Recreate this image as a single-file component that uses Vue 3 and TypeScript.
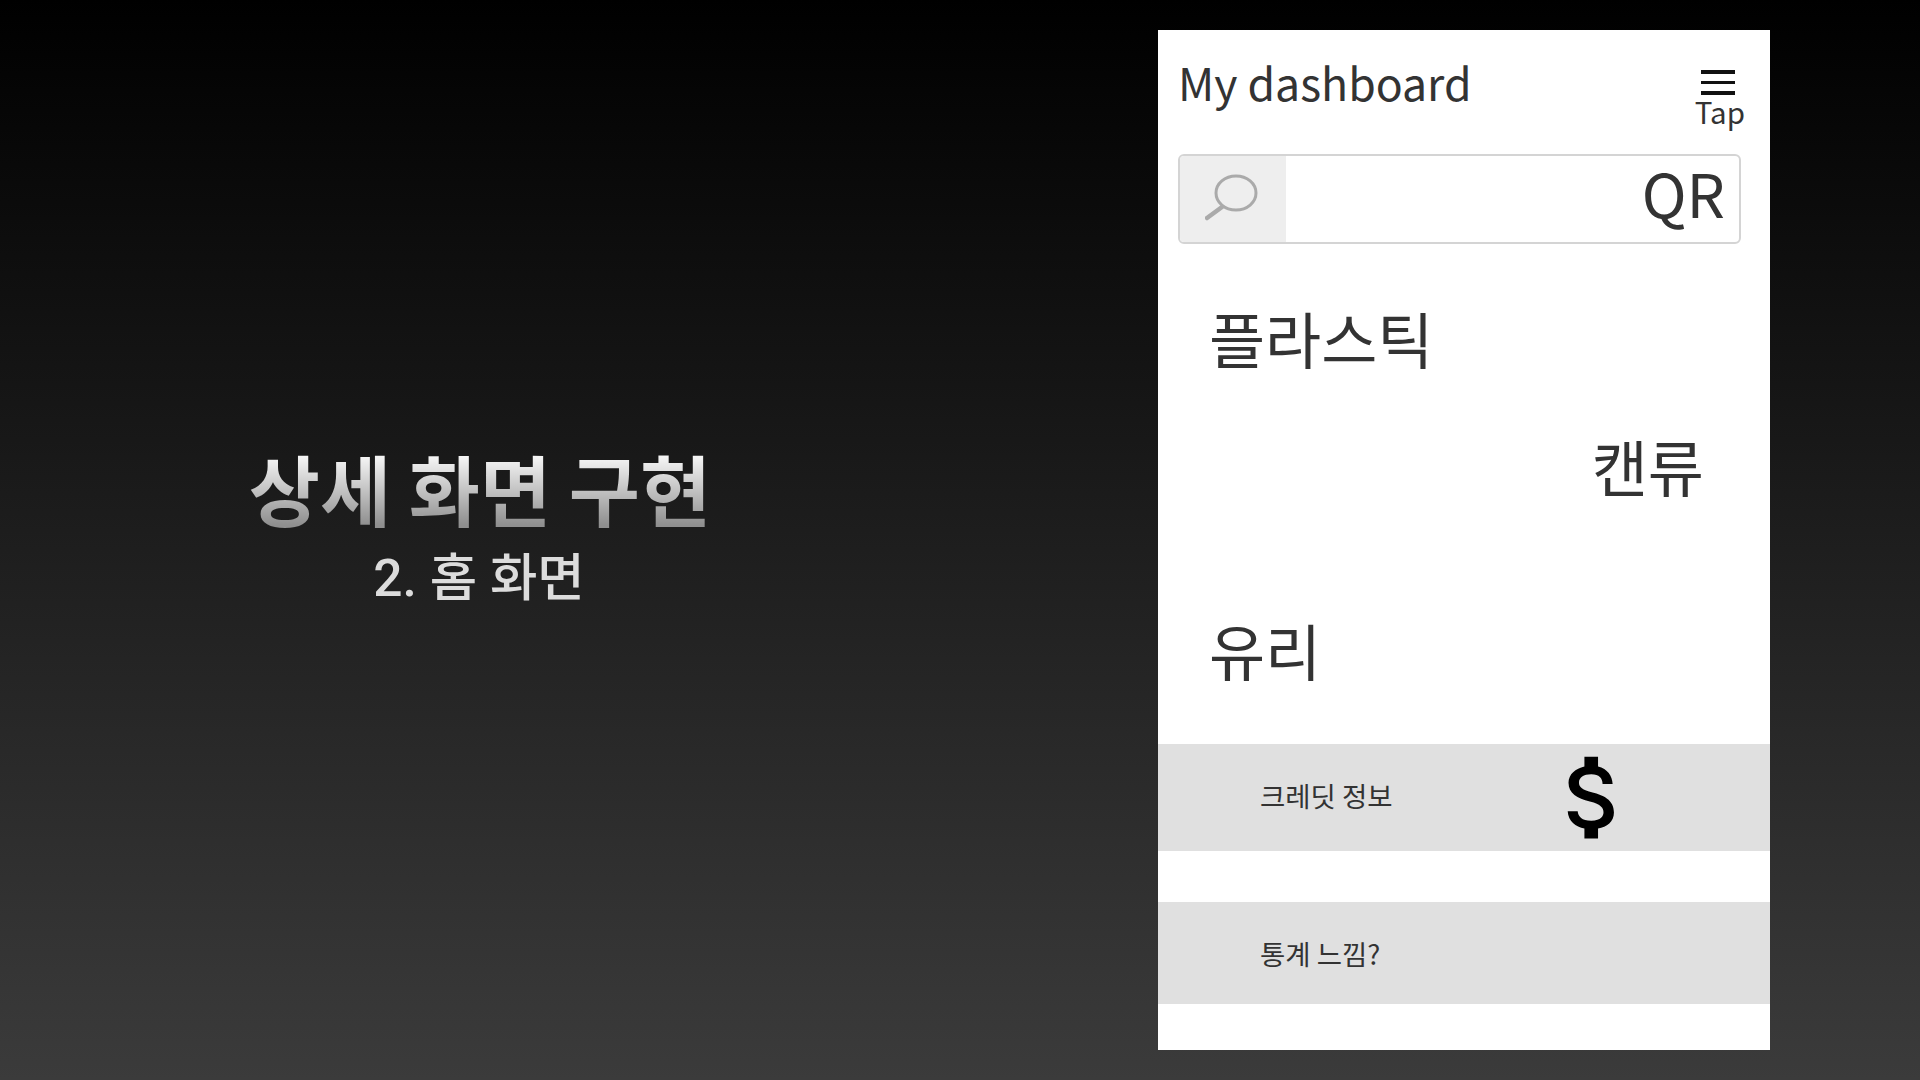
<script setup lang="ts">
const categories: { label: string; end: boolean }[] = [
  { label: '플라스틱', end: false },
  { label: '캔류', end: true },
  { label: '유리', end: false },
]
</script>

<template>
  <div class="slide">
    <section class="intro">
      <h1 class="headline">상세 화면 구현</h1>
      <p class="subline">2. 홈 화면</p>
    </section>
    <main class="phone">
      <header class="top">
        <h2 class="title">My dashboard</h2>
        <div class="menu">
          <span class="bars"><i></i><i></i><i></i></span>
          <span class="tap">Tap</span>
        </div>
      </header>
      <div class="search">
        <div class="search-icon">
          <svg width="60" height="52" viewBox="0 0 60 52" fill="none">
            <ellipse cx="31" cy="20" rx="20" ry="17" stroke="#aaa" stroke-width="3" />
            <path d="M17 34 2 45" stroke="#aaa" stroke-width="4.5" stroke-linecap="round" />
          </svg>
        </div>
        <span class="qr">QR</span>
      </div>
      <ul class="cats">
        <li v-for="c in categories" :key="c.label" class="cat" :class="{ end: c.end }">{{ c.label }}</li>
      </ul>
      <div class="row credit">
        <span class="row-label">크레딧 정보</span>
        <svg class="dollar" viewBox="0 0 24 24" fill="#000">
          <path d="M11.8 10.9c-2.27-.59-3-1.2-3-2.15 0-1.09 1.01-1.85 2.7-1.85 1.78 0 2.44.85 2.5 2.1h2.21c-.07-1.72-1.12-3.3-3.21-3.81V3h-3v2.16c-1.94.42-3.5 1.68-3.5 3.61 0 2.31 1.91 3.46 4.7 4.13 2.5.6 3 1.48 3 2.41 0 .69-.49 1.79-2.7 1.79-2.06 0-2.87-.92-2.98-2.1h-2.2c.12 2.19 1.76 3.42 3.68 3.83V21h3v-2.15c1.95-.37 3.5-1.5 3.5-3.55 0-2.84-2.43-3.81-4.7-4.4z" />
        </svg>
      </div>
      <div class="row stats">
        <span class="row-label">통계 느낌?</span>
      </div>
    </main>
  </div>
</template>

<style scoped>
.slide {
  width: 1920px;
  height: 1080px;
  display: flex;
  background: linear-gradient(180deg, #000 0%, #3b3b3b 100%);
  font-family: "Noto Sans CJK KR", "Noto Sans", sans-serif;
  overflow: hidden;
}
.intro {
  width: 958px;
  display: flex;
  flex-direction: column;
  align-items: center;
  padding-top: 438px;
  box-sizing: border-box;
}
.headline {
  margin: 0 0 0 2px;
  font-size: 77.4px;
  line-height: 99px;
  font-weight: 700;
  background: linear-gradient(180deg, #fff 12%, #8f8f8f 88%);
  -webkit-background-clip: text;
  background-clip: text;
  color: transparent;
}
.subline {
  margin: 3px 0 0;
  font-family: Roboto, "Noto Sans CJK KR", sans-serif;
  font-size: 51.5px;
  line-height: 78px;
  font-weight: 500;
  color: #dcdcdc;
}
.phone {
  width: 612px;
  height: 1020px;
  margin: 30px 0 0 200px;
  background: #fff;
  display: flex;
  flex-direction: column;
  color: #333;
}
.top {
  height: 124px;
  padding: 0 27px 0 20px;
  display: flex;
  justify-content: space-between;
}
.title {
  margin: 22px 0 0;
  font-size: 44.6px;
  line-height: 60px;
  font-weight: 400;
}
.menu {
  margin: 40px -2px 0 0;
  display: flex;
  flex-direction: column;
  align-items: center;
}
.bars {
  width: 34px;
  margin-right: 4px;
  display: flex;
  flex-direction: column;
  gap: 7px;
}
.bars i {
  height: 3.5px;
  background: #111;
}
.tap {
  font-size: 29.5px;
  line-height: 32px;
  font-weight: 400;
}
.search {
  margin: 0 29px 0 20px;
  height: 90px;
  box-sizing: border-box;
  border: 2px solid #d4d4d4;
  border-radius: 6px;
  display: flex;
  align-items: center;
  justify-content: space-between;
}
.search-icon {
  width: 106px;
  height: 100%;
  padding-left: 4px;
  box-sizing: border-box;
  border-radius: 4px 0 0 4px;
  background: #eee;
  display: flex;
  align-items: center;
  justify-content: center;
}
.qr {
  font-size: 60.5px;
  line-height: 70px;
  padding: 0 14px 14px 0;
}
.cats {
  list-style: none;
  margin: 0;
  padding: 52px 0 0;
  display: flex;
  flex-direction: column;
}
.cat {
  padding: 0 66px 0 51px;
  font-size: 61px;
  line-height: 84px;
  height: 128px;
  font-weight: 400;
}
.cat.end {
  text-align: right;
  height: 184px;
}
.row {
  background: #e0e0e0;
  display: flex;
  align-items: center;
  padding-left: 102px;
  font-size: 27.5px;
  font-weight: 400;
}
.credit {
  height: 107px;
  margin-top: 8px;
}
.credit .row-label {
  padding-bottom: 5px;
}
.stats {
  height: 102px;
  margin-top: 51px;
}
.row-label {
  width: 279px;
}
.dollar {
  width: 109px;
  height: 109px;
  flex: none;
}
</style>

<style>
html, body { background: #000; }
</style>
